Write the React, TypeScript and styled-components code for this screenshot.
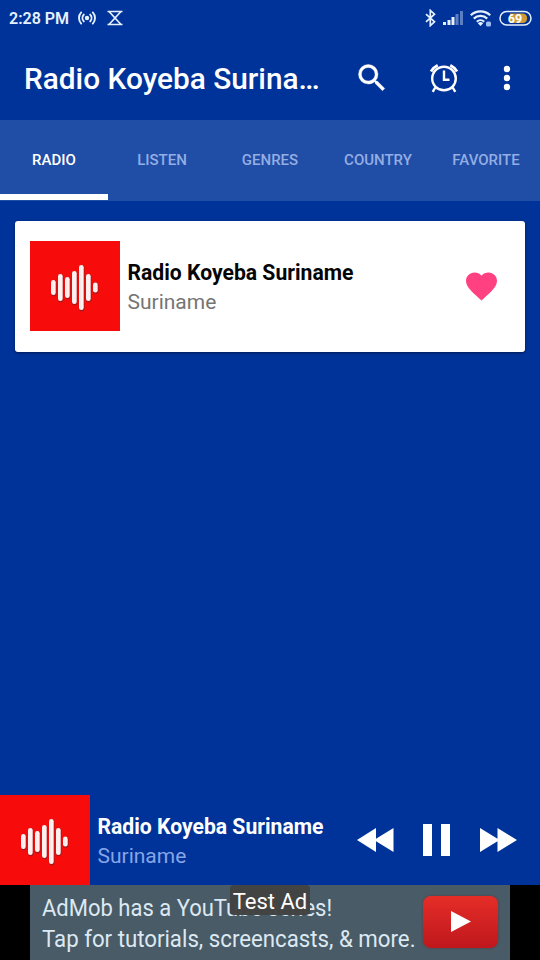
import React from "react";
import styled, { createGlobalStyle } from "styled-components";

const Global = createGlobalStyle`
  * { box-sizing: border-box; }
  body { margin: 0; background: #003399; font-family: Roboto, sans-serif; }
  svg { display: block; flex: none; }
`;

const Screen = styled.div`
  width: 540px;
  height: 960px;
  display: flex;
  flex-direction: column;
  overflow: hidden;
  background: #003399;
  color: #fff;
`;

const StatusBar = styled.div`
  height: 36px;
  padding: 0 8px 0 9px;
  display: flex;
  align-items: center;
  color: #e6f1ff;
`;

const Clock = styled.span`
  width: 69px;
  margin-top: 1px;
  font-size: 16px;
  font-weight: 600;
  line-height: 20px;
  white-space: nowrap;
`;

const StatusGroup = styled.div<{ $gap: number; $end?: boolean }>`
  display: flex;
  align-items: center;
  gap: ${(p) => p.$gap}px;
  margin-left: ${(p) => (p.$end ? "auto" : "0")};
`;

const AppBar = styled.header`
  height: 84px;
  padding: 0 15px 0 24px;
  display: flex;
  align-items: center;
`;

const Title = styled.h1`
  width: 330px;
  margin: 2px 0 0;
  font-size: 29.8px;
  font-weight: 500;
  line-height: 36px;
  white-space: nowrap;
`;

const AppActions = styled.div`
  display: flex;
  align-items: center;
  gap: 36.5px;
`;

const TabBar = styled.nav`
  height: 81px;
  display: grid;
  grid-template-columns: repeat(5, 1fr);
  background: #204da5;
`;

const Tab = styled.div<{ $active?: boolean }>`
  display: flex;
  align-items: center;
  justify-content: center;
  border-bottom: 6px solid ${(p) => (p.$active ? "#fff" : "transparent")};
  margin-bottom: 1.5px;
  padding-top: 7px;
  font-size: 15px;
  font-weight: 500;
  color: ${(p) => (p.$active ? "#fff" : "#94ade4")};
`;

const Content = styled.main`
  flex: 1;
  padding: 20px 15px;
`;

const Card = styled.article`
  height: 131px;
  padding: 0 28px 1px 15px;
  display: flex;
  align-items: center;
  border-radius: 3px;
  background: #fff;
  box-shadow: 0 1px 3px rgba(0, 0, 30, 0.55);
`;

const StationText = styled.div`
  flex: 1;
  margin-left: 7.5px;
  padding-top: 4px;
`;

const StationName = styled.div<{ $color: string }>`
  font-size: 21.15px;
  font-weight: 700;
  line-height: 28px;
  color: ${(p) => p.$color};
  white-space: nowrap;
`;

const StationPlace = styled.div<{ $color: string }>`
  font-size: 21px;
  line-height: 30px;
  color: ${(p) => p.$color};
`;

const Player = styled.section`
  height: 90px;
  padding-right: 23px;
  display: flex;
  align-items: center;
`;

const Controls = styled.div`
  display: flex;
  align-items: center;
  gap: 29px;
`;

const AdStrip = styled.footer`
  height: 75px;
  display: flex;
  justify-content: center;
  background: #000;
`;

const Ad = styled.div`
  position: relative;
  width: 480px;
  padding: 7px 12px 0 12px;
  display: flex;
  justify-content: space-between;
  background: #485b66;
`;

const AdCopy = styled.div`
  width: 373px;
  color: #dce8f2;
`;

const AdLine = styled.div<{ $scale: number }>`
  font-size: 24.5px;
  line-height: 31px;
  white-space: nowrap;
  transform: scaleX(${(p) => p.$scale});
  transform-origin: left;
`;

const PlayBadge = styled.div`
  width: 75px;
  height: 52px;
  margin-top: 4px;
  display: flex;
  align-items: center;
  justify-content: center;
  border-radius: 8px;
  background: linear-gradient(#e52d27, #bf171d);
  box-shadow: 0 0 2px rgba(120, 20, 20, 0.6);
`;

const TestLabel = styled.div`
  position: absolute;
  left: 200px;
  top: 0;
  width: 80px;
  height: 30px;
  border-radius: 4px;
  background: rgba(66, 66, 66, 0.98);
  font-size: 22px;
  line-height: 33px;
  text-align: center;
  white-space: nowrap;
`;

const BARS = [
  [23, 39, 54],
  [30, 33, 60],
  [37, 36, 57],
  [44, 30, 63],
  [51, 24, 69],
  [58, 33, 60],
  [65, 41.5, 51.5],
];

const Cover = () => (
  <svg width="90" height="90" viewBox="0 0 90 90">
    <rect width="90" height="90" fill="#f80b0b" />
    {BARS.map(([x, y1, y2]) => (
      <g key={x}>
        <rect x={x - 2.1} y={y1} width="5.6" height={y2 - y1 + 1.2} rx="2.8" fill="#a81818" />
        <rect x={x - 2} y={y1} width="4.7" height={y2 - y1} rx="2.35" fill="#fff0f0" />
      </g>
    ))}
  </svg>
);

const TABS = ["RADIO", "LISTEN", "GENRES", "COUNTRY", "FAVORITE"];

export default function App() {
  return (
    <Screen>
      <Global />
      <StatusBar>
        <Clock>2:28 PM</Clock>
        <StatusGroup $gap={11}>
          <svg width="18" height="16" viewBox="0 0 18 16" fill="none" stroke="currentColor" strokeWidth="1.9" strokeLinecap="round">
            <circle cx="9" cy="8" r="2.2" fill="currentColor" stroke="none" />
            <path d="M5.8 4.6a5 5 0 0 0 0 6.8M12.2 4.6a5 5 0 0 1 0 6.8M3.2 2.4a8.2 8.2 0 0 0 0 11.2M14.8 2.4a8.2 8.2 0 0 1 0 11.2" />
          </svg>
          <svg width="16" height="16" viewBox="0 0 16 16" fill="none" stroke="currentColor" strokeWidth="1.7">
            <path d="M.5 1.5h15M.5 14.5h15M2 1.500L8 8l-6 6.500M14 1.500L8 8l6 6.500" />
          </svg>
        </StatusGroup>
        <StatusGroup $gap={7} $end>
          <svg width="11" height="18" viewBox="0 0 11 18" fill="none" stroke="currentColor" strokeWidth="1.7">
            <path d="M1 5.2l8.5 7.6-4.2 3.8V1.4l4.2 3.8L1 12.8" />
          </svg>
          <svg width="20" height="16" viewBox="0 0 20 16" fill="currentColor">
            <rect x="0" y="12" width="3" height="3" />
            <rect x="4.5" y="10" width="3" height="5" />
            <rect x="8.5" y="7" width="3" height="8" />
            <rect x="12.5" y="4" width="3" height="11" opacity=".4" />
            <rect x="17" y="1" width="3" height="14" opacity=".4" />
          </svg>
          <svg width="22" height="18" viewBox="0 0 22 18" fill="none" stroke="currentColor" strokeWidth="2.2">
            <path d="M.8 6.2a14 14 0 0 1 19.4 0M3.8 9.6a9.5 9.5 0 0 1 13.4 0M6.8 12.7a5.4 5.4 0 0 1 7.4 0" />
            <path d="M7.8 14.2a4 4 0 0 1 5.4 0L10.5 17z" fill="currentColor" stroke="none" />
            <rect x="16" y="12.5" width="5" height="5" rx="1.5" fill="#9bbcf5" stroke="none" />
          </svg>
          <svg width="33" height="16" viewBox="0 0 33 16">
            <rect x="1" y="1.5" width="31" height="13.5" rx="6.7" fill="none" stroke="#e6f1ff" strokeWidth="1.5" />
            <path d="M11 3.5h13a4.800 4.800 0 0 1 0 9.500H11z" fill="#cf9b35" />
            <text x="16" y="12.7" textAnchor="middle" fontFamily="Roboto" fontSize="12.5" fontWeight="700" fill="#fff">69</text>
          </svg>
        </StatusGroup>
      </StatusBar>
      <AppBar>
        <Title>Radio Koyeba Surina…</Title>
        <AppActions>
          <svg width="36" height="36" viewBox="0 0 24 24" fill="currentColor" stroke="currentColor" strokeWidth=".25">
            <path d="M15.5 14h-.79l-.28-.27A6.471 6.471 0 0 0 16 9.5 6.5 6.5 0 1 0 9.5 16c1.61 0 3.09-.59 4.23-1.57l.27.28v.79l5 4.99L20.49 19l-4.99-5zm-6 0C7.01 14 5 11.99 5 9.5S7.01 5 9.5 5 14 7.01 14 9.5 11.99 14 9.5 14z" />
          </svg>
          <svg width="36" height="36" viewBox="1.5 0 36 36" fill="none" stroke="currentColor" strokeWidth="2.4">
            <circle cx="18.5" cy="18.5" r="11.8" />
            <path d="M18.5 10.5v9.3H24M9.8 27.5l-2.6 4.3M27.2 27.5l2.6 4.3" />
            <path d="M5.500 11.500a15 15 0 0 1 6.700-6.300M31.500 11.500a15 15 0 0 0-6.700-6.300" strokeWidth="2.8" />
          </svg>
          <svg width="16" height="36" viewBox="0 0 16 36" fill="currentColor">
            <circle cx="8" cy="9" r="3.2" />
            <circle cx="8" cy="18" r="3.2" />
            <circle cx="8" cy="27" r="3.2" />
          </svg>
        </AppActions>
      </AppBar>
      <TabBar>
        {TABS.map((t, i) => (
          <Tab key={t} $active={i === 0}>{t}</Tab>
        ))}
      </TabBar>
      <Content>
        <Card>
          <Cover />
          <StationText>
            <StationName $color="#050505">Radio Koyeba Suriname</StationName>
            <StationPlace $color="#757575">Suriname</StationPlace>
          </StationText>
          <svg width="31" height="28" viewBox="2 2.7 20 18.35" preserveAspectRatio="none" fill="#ff4081" overflow="visible">
            <path d="M12 21.35l-1.45-1.32C5.4 15.36 2 12.28 2 8.5 2 5.42 4.42 3 7.5 3c1.74 0 3.41.81 4.5 2.09C13.09 3.81 14.76 3 16.5 3 19.58 3 22 5.42 22 8.5c0 3.78-3.4 6.86-8.55 11.54L12 21.35z" />
          </svg>
        </Card>
      </Content>
      <Player>
        <Cover />
        <StationText>
          <StationName $color="#fff">Radio Koyeba Suriname</StationName>
          <StationPlace $color="#86a5e6">Suriname</StationPlace>
        </StationText>
        <Controls>
          <svg width="37" height="26" viewBox="0 0 37 26" fill="currentColor">
            <path d="M0 13L19 1v10.8L36.5 1v24L19 14.2V25z" />
          </svg>
          <svg width="28" height="32" viewBox="0 0 28 32" fill="currentColor">
            <path d="M0 0h9v32H0zM18 0h9v32h-9z" />
          </svg>
          <svg width="37" height="26" viewBox="0 0 37 26" fill="currentColor">
            <path d="M37 13L17.5 1v10.8L0 1v24l17.5-10.8V25z" />
          </svg>
        </Controls>
      </Player>
      <AdStrip>
        <Ad>
          <AdCopy>
            <AdLine $scale={0.898}>AdMob has a YouTube series!</AdLine>
            <AdLine $scale={0.908}>Tap for tutorials, screencasts, &amp; more.</AdLine>
          </AdCopy>
          <PlayBadge>
            <svg width="21" height="22" viewBox="-1 0 21 22" fill="#fff">
              <path d="M0 0L20 10.5 0 21z" />
            </svg>
          </PlayBadge>
          <TestLabel>Test Ad</TestLabel>
        </Ad>
      </AdStrip>
    </Screen>
  );
}
